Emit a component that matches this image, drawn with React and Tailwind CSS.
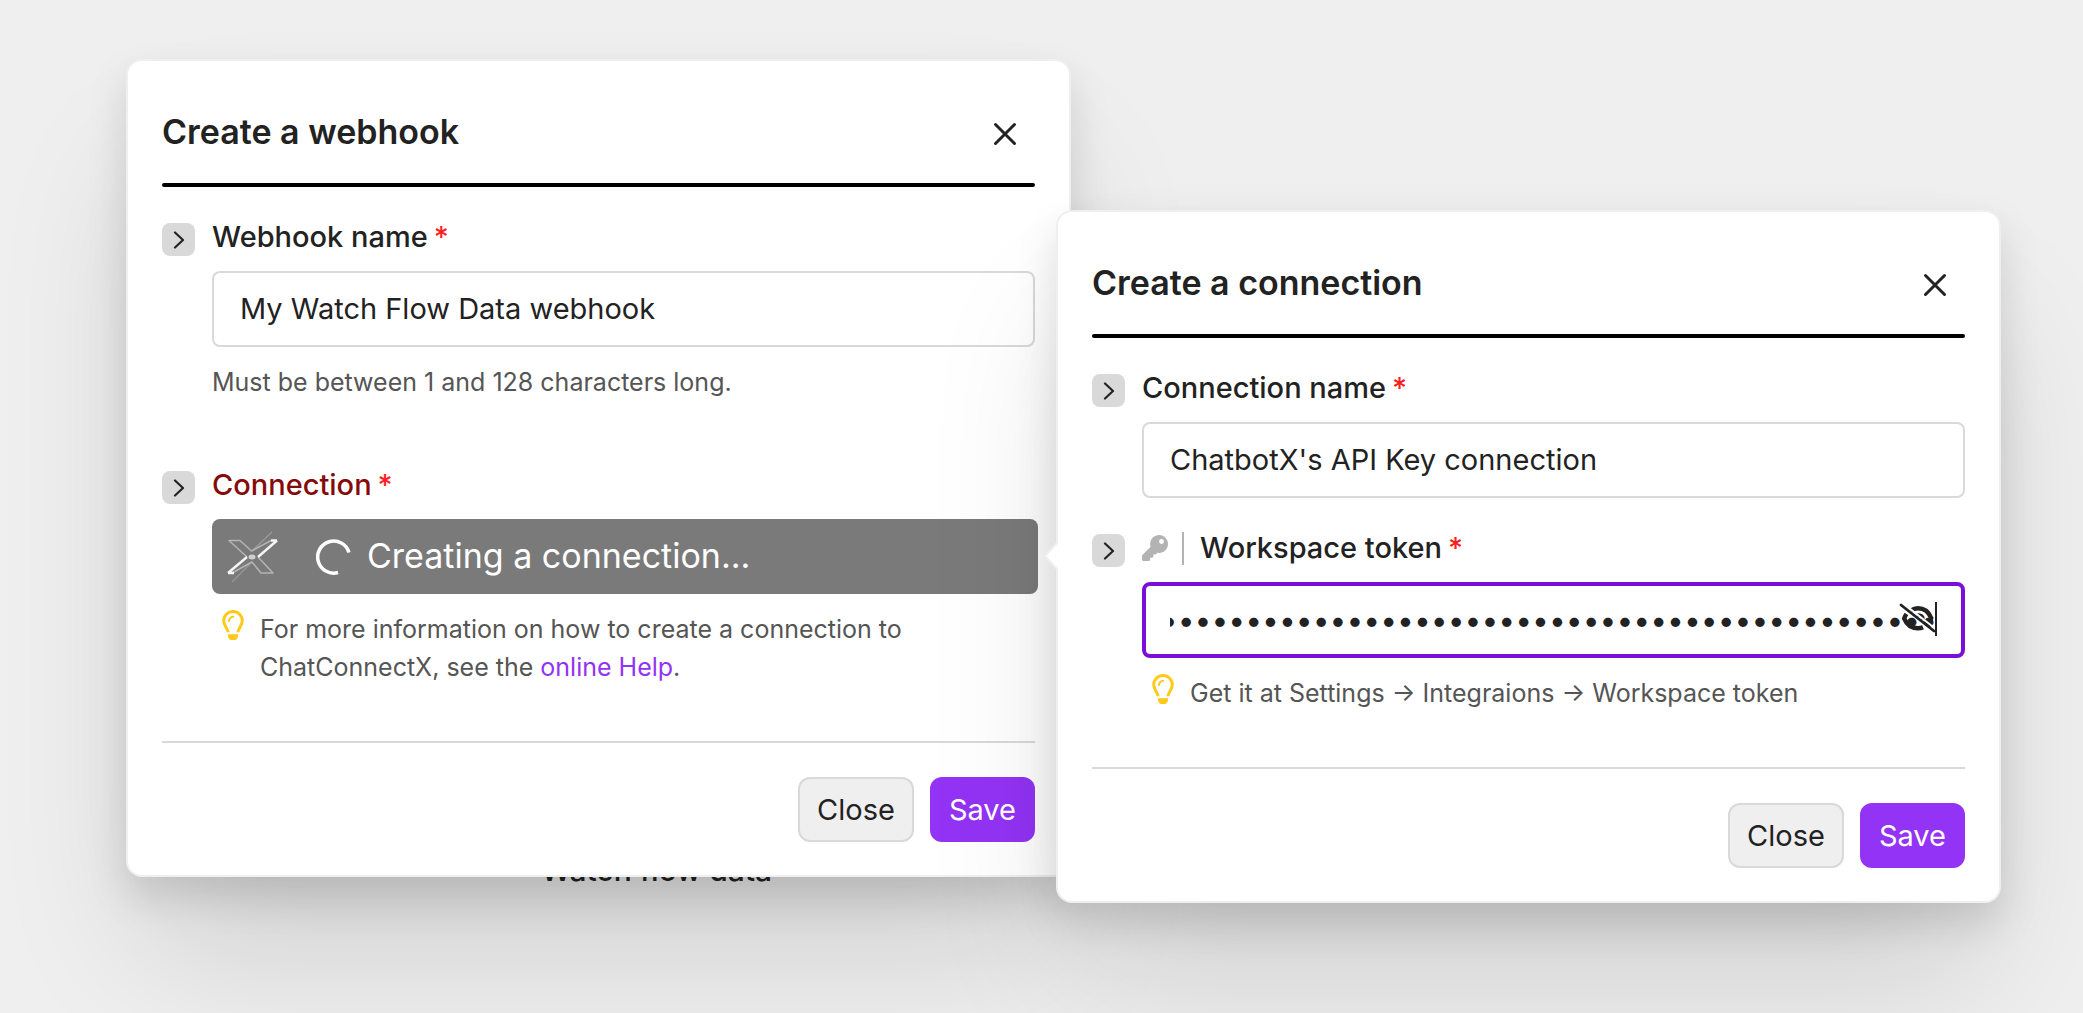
import { useEffect, useRef } from "react";

const token = "0123456789abcdef0123456789abcdef0123456789abcdef0123456789abcdef";

function CloseIcon() {
  return (
    <svg viewBox="0 0 24 24" className="size-6" fill="none" stroke="currentColor" strokeWidth="3" strokeLinecap="round" aria-hidden="true">
      <path d="M2.500 2.500 21.500 21.500M21.500 2.500 2.500 21.500" />
    </svg>
  );
}

function BulbIcon() {
  return (
    <svg viewBox="0 0 22 30" className="h-[30px] w-[22px] shrink-0" aria-hidden="true">
      <path d="M6 22.300c0-3.500-4.300-6.500-4.300-11.500a9.300 9.300 0 0 1 18.600 0c0 5-4.300 8-4.300 11.500" fill="none" stroke="#ffc91a" strokeWidth="3" />
      <path d="M7 11a4.200 4.200 0 0 1 4.200-4.200" fill="none" stroke="#ffc91a" strokeWidth="2" strokeLinecap="round" />
      <path d="M5.800 24.300h10.400v.9a4.700 4.700 0 0 1-10.400 0z" fill="#ffc91a" />
    </svg>
  );
}

function KeyIcon() {
  return (
    <svg viewBox="0 0 512 512" className="size-[26px]" fill="#b3b3b3" aria-hidden="true">
      <path d="M512 176c0 97.200-78.800 176-176 176-11.200 0-22.200-1.100-32.800-3.100l-24 27a24 24 0 0 1-18 8.100H224v40c0 13.300-10.700 24-24 24h-40v40c0 13.300-10.700 24-24 24H24c-13.300 0-24-10.700-24-24v-78c0-6.400 2.500-12.500 7-17l161.800-161.800A176 176 0 1 1 512 176zm-176-48a48 48 0 1 0 96 0 48 48 0 1 0-96 0z" />
    </svg>
  );
}

function EyeOffIcon() {
  return (
    <svg viewBox="0 0 36 34" className="h-[34px] w-9" fill="none" aria-hidden="true">
      <path d="M12 8.500C14 7 16 6.300 19 6.300c6 0 10.500 3.200 13.200 9.700-.8 2.500-1.800 4.300-3 5.700" stroke="#222222" strokeWidth="4.500" />
      <path d="M7.500 12C6.500 13.300 5.600 14.800 5.200 16.500c2.500 6.500 7.500 9.700 13.800 9.700 2 0 3.500-.3 5-.9" stroke="#222222" strokeWidth="4.500" />
      <path d="M18.500 13c3.800-.5 6 1.500 5.500 5" stroke="#222222" strokeWidth="3.500" />
      <path d="M5 2 36 26.500" stroke="#ffffff" strokeWidth="1.800" />
      <path d="M2 3 35 29" stroke="#222222" strokeWidth="2.800" strokeLinecap="round" />
    </svg>
  );
}

function LogoIcon() {
  return (
    <svg viewBox="0 0 54 52" className="h-[52px] w-[54px]" fill="none" strokeLinejoin="round" aria-hidden="true">
      <path d="M28 20 48 1M8 51 27 32" stroke="#969696" strokeWidth="1.500" />
      <path d="M23 26 5 9.500h11L27.500 20 47 9.500M34 26l15 16H37L28 31 8 42" stroke="#b4b4b4" strokeWidth="1.500" />
      <path d="M53 9.500 34 26M4 42 23 26M53 9.500h-6M4 42h6" stroke="#f5f5f5" strokeWidth="2.400" />
      <ellipse cx="28" cy="26" rx="3.500" ry="2.500" fill="#cfcfcf" />
    </svg>
  );
}

function Expander({ label }) {
  return (
    <button type="button" aria-label={label} className="flex size-[33px] shrink-0 items-center justify-center rounded-lg bg-[#d9d9d9] text-[#222222]">
      <svg viewBox="0 0 12 18" className="h-[18px] w-3" fill="none" stroke="currentColor" strokeWidth="2.200" strokeLinecap="round" strokeLinejoin="round" aria-hidden="true">
        <path d="M2 1.500 10 9 2 16.500" />
      </svg>
    </button>
  );
}

function Field({ label, id, tone = "text-[#222222]", icon, children }) {
  return (
    <div className="flex gap-[17px]">
      <Expander label={"Expand " + label} />
      <div className="min-w-0 flex-1">
        <div className="mb-5 flex h-7 items-center">
          {icon}
          <label htmlFor={id} className={"text-[29px] leading-7 font-medium " + tone}>
            {label}
            <span className="ml-1.5 text-[#ff1f1f]">*</span>
          </label>
        </div>
        {children}
      </div>
    </div>
  );
}

function Hint({ children }) {
  return (
    <div className="mt-4 flex gap-4 pl-2.5">
      <BulbIcon />
      <p className="text-[25px] leading-[38px] text-[#555555]">{children}</p>
    </div>
  );
}

function Dialog({ title, children }) {
  return (
    <section
      aria-label={title}
      className="relative rounded-2xl border-2 border-[#efefef] bg-white px-[34px] pt-6 pb-[33px] shadow-[0_20px_40px_rgba(0,0,0,0.13),0_90px_140px_-20px_rgba(0,0,0,0.14)]"
    >
      <header className="flex h-[98px] items-center justify-between pr-[18px]">
        <h2 className="pb-1 text-[34px] leading-10 font-semibold">{title}</h2>
        <button type="button" aria-label="Close dialog">
          <CloseIcon />
        </button>
      </header>
      <div className="mb-9 h-1 rounded-full bg-black" />
      {children}
      <footer className="mt-[55px] flex justify-end gap-4 border-t-2 border-[#d9d9d9] pt-[34px] text-[29px] leading-9">
        <button type="button" className="h-[65px] rounded-xl border-2 border-[#d9d9d9] bg-[#efefef] px-[17px]">Close</button>
        <button type="button" className="h-[65px] rounded-xl bg-[#9333f5] px-[19px] text-white">Save</button>
      </footer>
    </section>
  );
}

const inputClass =
  "block h-[76px] w-full rounded-lg border-2 border-[#d9d9d9] bg-transparent px-[26px] pb-0.5 text-[29px] text-[#222222] outline-none";

export default function App() {
  const tokenRef = useRef(null);
  useEffect(() => {
    tokenRef.current.scrollLeft = tokenRef.current.scrollWidth;
  }, []);

  return (
    <main className="min-h-screen overflow-hidden bg-[#efefef] pt-[59px] font-['Inter',sans-serif] text-[#222222]">
      <div className="flex items-start pr-[82px] pl-[126px]">
        <div className="min-w-0 flex-1">
          <Dialog title="Create a webhook">
            <Field label="Webhook name" id="webhook-name">
              <input id="webhook-name" type="text" defaultValue="My Watch Flow Data webhook" className={inputClass} />
              <p className="mt-4 text-[25px] leading-[38px] text-[#555555]">Must be between 1 and 128 characters long.</p>
            </Field>
            <div className="h-[70px]" />
            <Field label="Connection" id="connection" tone="text-[#850b0b]">
              <button id="connection" type="button" className="-mr-[3px] flex h-[75px] w-[calc(100%+3px)] items-center rounded-lg bg-[#7a7a7a] pl-3 text-[34px] text-white">
                <LogoIcon />
                <svg viewBox="0 0 36 36" className="mr-[15px] ml-[38px] size-9" fill="none" stroke="#ffffff" strokeWidth="3.500" aria-hidden="true">
                  <path d="M33 13.500A16 16 0 1 0 22 33.500" />
                </svg>
                <span className="pb-0.5">Creating a connection...</span>
              </button>
              <Hint>
                For more information on how to create a connection to ChatConnectX, see the{" "}
                <a href="#help" className="text-[#9333f5]">online Help</a>.
              </Hint>
            </Field>
          </Dialog>
          <p className="-mt-[23px] pl-[116px] text-center text-[30px] leading-8 font-medium">Watch flow data</p>
        </div>
        <div className="relative mt-[151px] -ml-[15px] min-w-0 flex-1">
          <Dialog title="Create a connection">
            <Field label="Connection name" id="connection-name">
              <input id="connection-name" type="text" defaultValue="ChatbotX's API Key connection" className={inputClass} />
            </Field>
            <div className="h-9" />
            <Field
              label="Workspace token"
              id="workspace-token"
              icon={
                <span className="mr-4 flex h-[33px] items-center border-r-2 border-[#b3b3b3] pr-3.5">
                  <KeyIcon />
                </span>
              }
            >
              <div className="relative">
                <input
                  ref={tokenRef}
                  id="workspace-token"
                  type="password"
                  defaultValue={token}
                  className="block h-[76px] w-full rounded-lg border-4 border-[#7a10d6] bg-white px-6 text-[30px] text-[#222222] outline-none"
                />
                <button type="button" aria-label="Show token" className="absolute top-5 right-7 border-r-2 border-[#222222]">
                  <EyeOffIcon />
                </button>
              </div>
              <Hint>Get it at Settings → Integraions → Workspace token</Hint>
            </Field>
            <svg viewBox="0 0 14 30" className="absolute top-[329px] -left-[14px] h-[30px] w-3.5" aria-hidden="true">
              <path d="M14 1 1 15 14 29" fill="#ffffff" stroke="#efefef" strokeWidth="2" />
            </svg>
          </Dialog>
        </div>
      </div>
    </main>
  );
}
